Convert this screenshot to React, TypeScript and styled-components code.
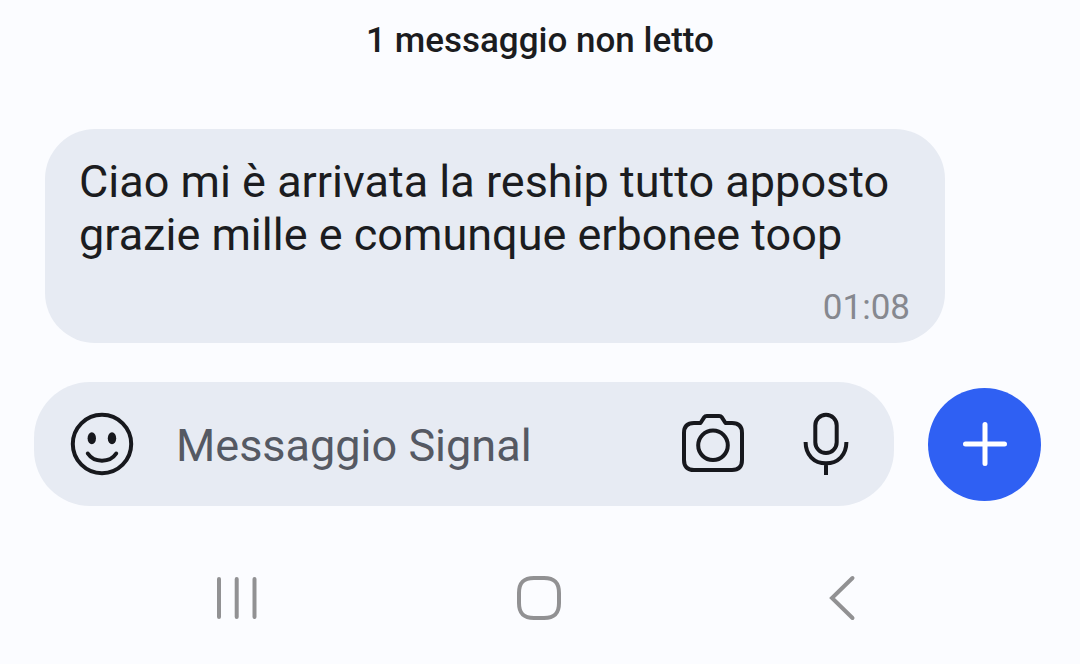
import React from "react";
import styled, { createGlobalStyle } from "styled-components";

const GlobalStyle = createGlobalStyle`
  *, *::before, *::after { box-sizing: border-box; }
  body {
    margin: 0;
    background: #fbfcff;
    color: #1b1c20;
    font-family: Roboto, "Liberation Sans", sans-serif;
  }
`;

const Screen = styled.div`
  display: flex;
  flex-direction: column;
`;

const UnreadDivider = styled.h2`
  margin: 0;
  padding: 21px 16px 0;
  font-size: 35px;
  line-height: 40px;
  font-weight: 500;
  text-align: center;
`;

const Conversation = styled.main`
  padding: 68px 46px 0 45px;
`;

const Bubble = styled.article`
  display: flex;
  flex-direction: column;
  width: 91%;
  padding: 26px 35px 15px 34px;
  border-radius: 50px;
  background: #e7ebf3;
`;

const MessageText = styled.p`
  margin: 0;
  font-size: 45px;
  line-height: 53px;
`;

const Time = styled.time`
  align-self: flex-end;
  padding-top: 27px;
  font-size: 35px;
  line-height: 40px;
  color: #86888f;
`;

const Composer = styled.form`
  display: flex;
  align-items: center;
  gap: 34px;
  padding: 39px 39px 0 34px;
`;

const Field = styled.div`
  display: flex;
  flex: 1;
  align-items: center;
  min-width: 0;
  height: 124px;
  padding: 0 36px;
  border-radius: 56px;
  background: #e7ebf3;
`;

const MessageInput = styled.input`
  flex: 1;
  min-width: 0;
  margin: 0 40px 0 42px;
  padding: 2px 0 0;
  border: 0;
  outline: 0;
  background: transparent;
  color: #1b1c20;
  font: 400 45px/53px Roboto, "Liberation Sans", sans-serif;

  &::placeholder {
    color: #555963;
    opacity: 1;
  }
`;

const IconButton = styled.button`
  display: grid;
  flex: none;
  place-items: center;
  padding: 0;
  border: 0;
  background: transparent;
  color: #17181d;
  cursor: pointer;
`;

const FieldActions = styled.div`
  display: flex;
  gap: 49px;
`;

const AddButton = styled(IconButton)`
  width: 113px;
  height: 113px;
  border-radius: 50%;
  background: #2f60f3;
  color: #fff;
`;

const SystemNav = styled.nav`
  display: grid;
  grid-template-columns: repeat(3, 1fr);
  padding: 68px 87px 0 85px;
`;

const NavButton = styled(IconButton)`
  color: #919193;
`;

const Icon = styled.svg<{ $size: number; $weight?: number }>`
  display: block;
  width: ${({ $size }) => $size}px;
  height: ${({ $size }) => $size}px;
  fill: none;
  stroke: currentColor;
  stroke-width: ${({ $weight = 4 }) => $weight};
`;

export default function App() {
  return (
    <>
      <GlobalStyle />
      <Screen>
        <UnreadDivider>1 messaggio non letto</UnreadDivider>
        <Conversation>
          <Bubble>
            <MessageText>
              Ciao mi è arrivata la reship tutto apposto grazie mille e comunque erbonee toop
            </MessageText>
            <Time dateTime="01:08">01:08</Time>
          </Bubble>
        </Conversation>
        <Composer onSubmit={(event) => event.preventDefault()}>
          <Field>
            <IconButton type="button" aria-label="Emoji">
              <Icon $size={64} viewBox="0 0 64 64">
                <circle cx="32" cy="32" r="29.2" />
                <g fill="currentColor" stroke="none">
                  <ellipse cx="21.8" cy="26.3" rx="4.2" ry="6" />
                  <ellipse cx="42" cy="26.3" rx="4.2" ry="6" />
                </g>
                <path d="M17.8 41.5C24 51 40 51 46.2 41.5" strokeLinecap="round" />
              </Icon>
            </IconButton>
            <MessageInput type="text" aria-label="Messaggio Signal" placeholder="Messaggio Signal" />
            <FieldActions>
              <IconButton type="button" aria-label="Fotocamera">
                <Icon $size={64} viewBox="0 0 64 64" strokeLinejoin="round">
                  <path d="M13 11h6.500L23.300 5.200C23.900 4.300 24.600 4 25.800 4h12.400c1.200 0 1.900.3 2.500 1.200L44.500 11H51c6.600 0 10 3.400 10 10v27c0 6.600-3.400 10-10 10H13C6.400 58 3 54.600 3 48V21c0-6.600 3.400-10 10-10Z" />
                  <circle cx="32" cy="33.300" r="14.800" />
                </Icon>
              </IconButton>
              <IconButton type="button" aria-label="Messaggio vocale">
                <Icon $size={64} viewBox="0 0 64 64">
                  <rect x="21.300" y="2.800" width="21.400" height="38.200" rx="10.700" />
                  <path d="M11.600 30C11.600 43 20 51.300 32 51.300S52.400 43 52.400 30M32 51.300V63" />
                </Icon>
              </IconButton>
            </FieldActions>
          </Field>
          <AddButton type="button" aria-label="Aggiungi allegato">
            <Icon $size={48} $weight={5} viewBox="0 0 48 48" strokeLinecap="round">
              <path d="M24 4.500v39M4.500 24h39" />
            </Icon>
          </AddButton>
        </Composer>
        <SystemNav aria-label="Navigazione di sistema">
          <NavButton type="button" aria-label="Recenti">
            <Icon $size={48} viewBox="0 0 48 48" strokeLinecap="round">
              <path d="M7 5v38M24.700 5v38M42.500 5v38" />
            </Icon>
          </NavButton>
          <NavButton type="button" aria-label="Home">
            <Icon $size={48} viewBox="0 0 48 48">
              <path d="M19 4H29C39.500 4 44 8.500 44 19V29C44 39.500 39.500 44 29 44H19C8.500 44 4 39.500 4 29V19C4 8.500 8.500 4 19 4Z" />
            </Icon>
          </NavButton>
          <NavButton type="button" aria-label="Indietro">
            <Icon $size={48} viewBox="0 0 48 48" strokeLinecap="round">
              <path d="M34.500 4 14 24l20.500 20" />
            </Icon>
          </NavButton>
        </SystemNav>
      </Screen>
    </>
  );
}
